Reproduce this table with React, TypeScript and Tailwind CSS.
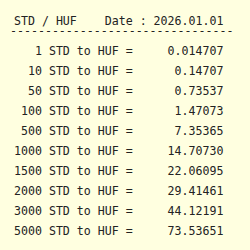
import React from "react";

const rows: [string, string][] = [
  ["1", "0.014707"],
  ["10", "0.14707"],
  ["50", "0.73537"],
  ["100", "1.47073"],
  ["500", "7.35365"],
  ["1000", "14.70730"],
  ["1500", "22.06095"],
  ["2000", "29.41461"],
  ["3000", "44.12191"],
  ["5000", "73.53651"],
];

export default function App() {
  return (
    <div
      className="w-[250px] h-[250px] overflow-hidden bg-[#ffffe0] text-[#222222] text-[11.6px] pt-[15px]"
      style={{ fontFamily: '"DejaVu Sans Mono", monospace' }}
    >
      <div className="pl-[14px] leading-[12px] whitespace-pre">STD / HUF    Date : 2026.01.01</div>
      <div className="pl-[10px] leading-[9px] whitespace-pre">--------------------------------</div>
      <div className="mt-[5px] pl-[14px] flex flex-col">
        {rows.map(([a, v]) => (
          <div key={a} className="leading-[20px] whitespace-pre">
            {a.padStart(4, " ") + " STD to HUF =" + v.padStart(13, " ")}
          </div>
        ))}
      </div>
    </div>
  );
}
